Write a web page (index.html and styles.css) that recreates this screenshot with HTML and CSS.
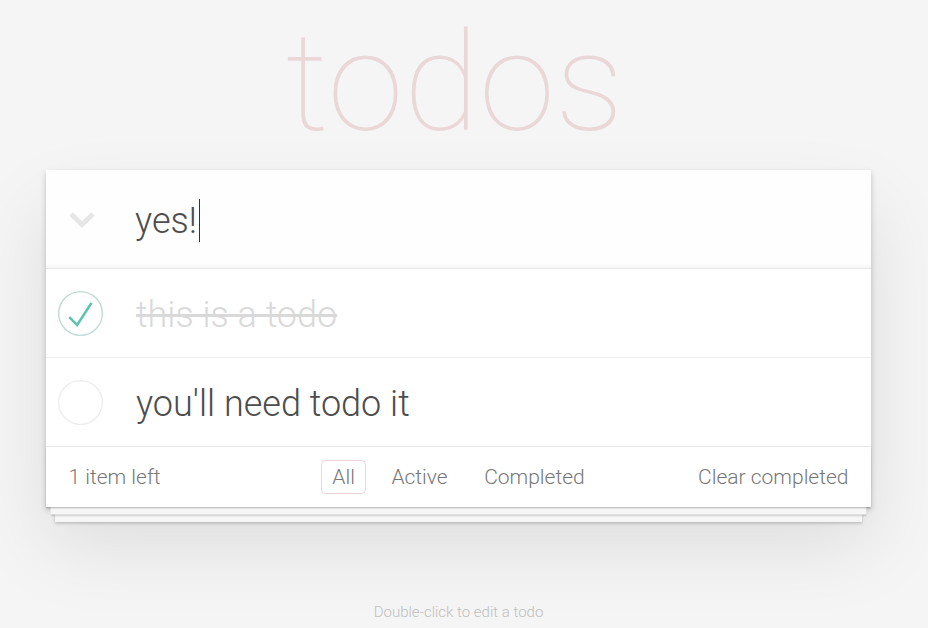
FILE: index.html
```html
<!DOCTYPE html>
<html lang="en">
<head>
<meta charset="utf-8">
<title>todos</title>
<link rel="stylesheet" href="styles.css">
</head>
<body>
<h1 class="title">todos</h1>
<section class="todoapp">
  <header class="header">
    <span class="toggle-all">
      <svg width="26" height="16" viewBox="0 0 26 16"><polyline points="2,2 13,12.5 24,2" fill="none" stroke="#e6e6e6" stroke-width="5"/></svg>
    </span>
    <div class="new-todo">yes!<span class="caret"></span></div>
  </header>
  <ul class="todo-list">
    <li class="todo completed">
      <svg class="toggle" width="45" height="45" viewBox="0 0 100 100"><circle cx="50" cy="50" r="48.5" fill="none" stroke="#bddad5" stroke-width="3"/><path fill="#5dc2af" d="M72 25L42 71 27 56l-4 4 20 20 34-52z"/></svg>
      <label>this is a todo</label>
    </li>
    <li class="todo">
      <svg class="toggle" width="45" height="45" viewBox="0 0 100 100"><circle cx="50" cy="50" r="48.5" fill="none" stroke="#ededed" stroke-width="3"/></svg>
      <label>you'll need todo it</label>
    </li>
  </ul>
  <footer class="footer">
    <span class="todo-count">1 item left</span>
    <ul class="filters">
      <li><a class="selected">All</a></li>
      <li><a>Active</a></li>
      <li><a>Completed</a></li>
    </ul>
    <span class="clear-completed">Clear completed</span>
  </footer>
</section>
<p class="info">Double-click to edit a todo</p>
</body>
</html>
```

FILE: styles.css
```css
* { box-sizing: border-box; }

body {
  margin: 0;
  background: #f5f5f5;
  color: #4d4d4d;
  font-family: Roboto, "Helvetica Neue", "Liberation Sans", sans-serif;
  font-weight: 300;
}

.title {
  width: 825px;
  margin: 0 0 4px 42px;
  height: 166px;
  line-height: 166px;
  font-size: 138px;
  font-weight: 100;
  text-align: center;
  color: rgba(175, 47, 47, 0.15);
}

.todoapp {
  width: 825px;
  margin-left: 46px;
  background: #fff;
  box-shadow: 0 3px 6px 0 rgba(0, 0, 0, 0.2), 0 37.5px 75px 0 rgba(0, 0, 0, 0.1);
}

.header {
  display: flex;
  align-items: center;
  height: 98px;
  background: rgba(0, 0, 0, 0.003);
  box-shadow: inset 0 -3px 1.5px rgba(0, 0, 0, 0.03);
}

.toggle-all {
  display: flex;
  width: 89px;
  padding-left: 23px;
  padding-top: 2px;
}

.new-todo {
  display: flex;
  align-items: center;
  padding-top: 3px;
  font-size: 36px;
  line-height: 50px;
  color: #4d4d4d;
}

.caret {
  display: inline-block;
  width: 1.5px;
  height: 43px;
  margin-left: 2px;
  background: #333;
}

.todo-list {
  list-style: none;
  margin: 0;
  padding: 0;
  border-top: 1px solid #e6e6e6;
}

.todo-list li {
  display: flex;
  align-items: center;
  font-size: 36px;
  border-bottom: 1px solid #ededed;
}

.todo-list li:last-child { border-bottom: none; }

.toggle {
  flex: none;
  margin-left: 12px;
}

.todo-list label {
  margin-left: 33px;
  padding: 24px 0 20px;
  line-height: 44px;
}

.todo-list li.completed label {
  color: #d9d9d9;
  text-decoration: line-through;
}

.footer {
  display: grid;
  grid-template-columns: 1fr auto 1fr;
  align-items: center;
  height: 61px;
  padding: 0 22.5px;
  border-top: 1px solid #e6e6e6;
  color: #777;
  font-size: 21px;
  box-shadow: 0 1.5px 1.5px rgba(0, 0, 0, 0.2),
              0 12px 0 -4.5px #f6f6f6,
              0 13.5px 1.5px -4.5px rgba(0, 0, 0, 0.2),
              0 24px 0 -9px #f6f6f6,
              0 25.5px 3px -9px rgba(0, 0, 0, 0.2);
}

.filters {
  display: flex;
  list-style: none;
  margin: 0;
  padding: 0;
}

.filters a {
  display: block;
  margin: 0 6.75px;
  padding: 2px 10.5px;
  line-height: 28px;
  border: 1px solid transparent;
  border-radius: 4.5px;
  color: inherit;
}

.filters a.selected { border-color: rgba(175, 47, 47, 0.2); }

.clear-completed { justify-self: end; }

.info {
  width: 825px;
  margin: 95px 0 0 46px;
  text-align: center;
  font-size: 15px;
  line-height: 21px;
  color: #bfbfbf;
}
```
